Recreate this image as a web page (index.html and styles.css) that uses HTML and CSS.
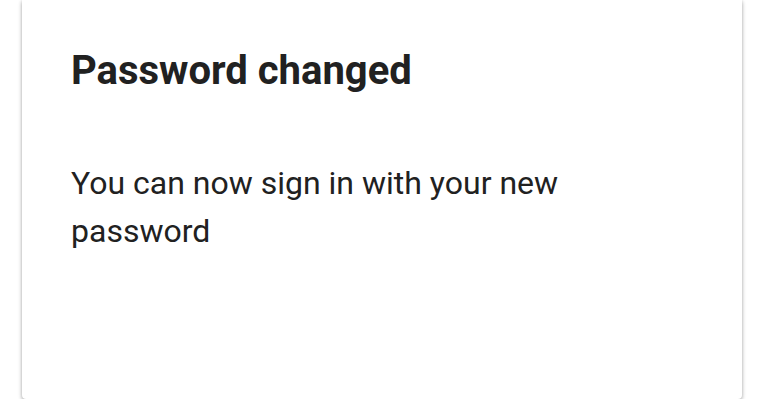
FILE: index.html
```html
<!DOCTYPE html>
<html>

<head>
    <title>Password changed</title>
    <link rel="stylesheet" href="styles.css">
</head>

<body>
    <section class="card">
        <h1 class="card-title">Password changed</h1>
        <p class="card-text">You can now sign in with your new password</p>
    </section>
</body>

</html>
```

FILE: styles.css
```css
body {
    font-family: Roboto, 'Noto Sans', sans-serif;
    background-color: #fff;
    color: #212121;
    margin: 0;
}

.card {
    background-color: #fff;
    margin: 0 16px 0 22px;
    height: 399px;
    box-sizing: border-box;
    padding: 47px 49px 0 49px;
    border-radius: 0 0 4px 4px;
    box-shadow: 0 2px 4px rgba(0, 0, 0, 0.3), 0 0 3px rgba(0, 0, 0, 0.12);
}

.card-title {
    font-size: 40px;
    font-weight: 700;
    line-height: 47px;
    margin: 0;
}

.card-text {
    font-size: 32px;
    line-height: 48px;
    margin: 65px 0 0 0;
}
```
